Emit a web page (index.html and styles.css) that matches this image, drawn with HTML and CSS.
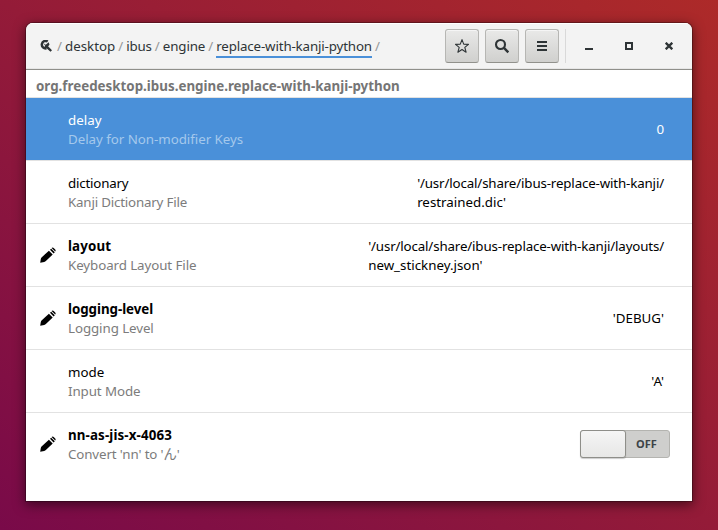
FILE: index.html
```
<!DOCTYPE html>
<html lang="en">
<head>
<meta charset="utf-8">
<title>dconf Editor</title>
<link rel="stylesheet" href="styles.css">
</head>
<body>
<svg width="0" height="0" class="defs" aria-hidden="true">
  <symbol id="pencil" viewBox="0 0 16 16">
    <path d="M.2 15.800L.8 12Q1 11 1.800 10.200L8.900 3.700l3.800 3.800-6.800 6.600q-.7.700-1.700.9zM10 2.800l1.200-1.100 3.600 3.600-1.200 1.200zM11.600.9q1.100-1 2.100 0L15.200 2.500q.9 1 0 2.100z"/>
  </symbol>
</svg>
<div class="window">
  <header class="header">
    <nav class="path">
      <svg class="root-icon" viewBox="0 0 12 12"><path d="M7.700 1.500A3.800 3.800 0 1 0 6.500 8.400" fill="none" stroke="#2e3436" stroke-width="2.500"/><path d="M3.500 3.200l2.200 1.600L8.700 2.200 9.500 4.800 8.100 6.300l3.900 3.900-1.500 1.600-4-3.500-1.600.7L3.500 7.500l1.800-1.600z" fill="#2e3436"/></svg>
      <span class="slash">/</span><a>desktop</a><span class="slash">/</span><a class="tight">ibus</a><span class="slash">/</span><a class="snug">engine</a><span class="slash">/</span><a class="current snug">replace-with-kanji-python</a><span class="slash">/</span>
    </nav>
    <div class="actions">
      <button class="btn" aria-label="Bookmarks"><svg viewBox="0 0 16 16" width="16" height="16"><path d="M8 1.600l1.700 4.500 4.800.3-3.700 3 1.300 4.800L8 11.500l-4.100 2.700 1.300-4.800-3.700-3 4.800-.3z" fill="none" stroke="#2e3436" stroke-width="1.100" stroke-linejoin="round"/></svg></button>
      <button class="btn" aria-label="Search"><svg viewBox="0 0 16 16" width="16" height="16"><circle cx="6.500" cy="6.500" r="4.500" fill="none" stroke="#2e3436" stroke-width="2.100"/><path d="M9.700 9.700l4.600 4.600" stroke="#2e3436" stroke-width="2.400"/></svg></button>
      <button class="btn" aria-label="Menu"><svg viewBox="0 0 16 16" width="16" height="16"><path d="M3 3h10v2H3zM3 7h10v2H3zM3 11h10v2H3z" fill="#2e3436"/></svg></button>
      <span class="separator"></span>
    </div>
    <div class="controls">
      <svg viewBox="0 0 8 8"><path d="M0 6h8v2H0z" fill="#2e3436"/></svg>
      <svg viewBox="0 0 8 8"><path d="M1 1h6v6H1z" fill="none" stroke="#2e3436" stroke-width="2"/></svg>
      <svg viewBox="0 0 8 8"><path d="M.7.700l6.600 6.600M7.300.700L.7 7.300" stroke="#2e3436" stroke-width="2.300"/></svg>
    </div>
  </header>
  <h1 class="schema">org.freedesktop.ibus.engine.replace-with-kanji-python</h1>
  <main class="list">
    <section class="row selected"><div class="mark"></div><div class="key"><div class="name">delay</div><div class="desc even">Delay for Non-modifier Keys</div></div><div class="value">0</div></section>
    <section class="row"><div class="mark"></div><div class="key"><div class="name tight">dictionary</div><div class="desc tight">Kanji Dictionary File</div></div><div class="value multi">'/usr/local/share/ibus-replace-with-kanji/<br><span class="even">restrained.dic'</span></div></section>
    <section class="row edited"><div class="mark"><svg><use href="#pencil"/></svg></div><div class="key"><div class="name wide">layout</div><div class="desc">Keyboard Layout File</div></div><div class="value multi">'/usr/local/share/ibus-replace-with-kanji/layouts/<br><span class="even">new_stickney.json'</span></div></section>
    <section class="row edited"><div class="mark"><svg><use href="#pencil"/></svg></div><div class="key"><div class="name even">logging-level</div><div class="desc">Logging Level</div></div><div class="value">'DEBUG'</div></section>
    <section class="row"><div class="mark"></div><div class="key"><div class="name">mode</div><div class="desc">Input Mode</div></div><div class="value">'A'</div></section>
    <section class="row edited last"><div class="mark"><svg><use href="#pencil"/></svg></div><div class="key"><div class="name wide">nn-as-jis-x-4063</div><div class="desc snug">Convert 'nn' to 'ん'</div></div><div class="switch"><span class="knob"></span><span class="state">OFF</span></div></section>
  </main>
</div>
</body>
</html>
```
FILE: styles.css
```
* { box-sizing: border-box; }
body {
  margin: 0;
  width: 718px;
  height: 530px;
  padding: 23px 26px 29px;
  overflow: hidden;
  font: 13.33px/19px "Noto Sans", "Noto Sans CJK JP", sans-serif;
  color: #000;
  background: linear-gradient(to top right, #790a49 0%, #941b38 50%, #ad2a29 100%);
}
.defs { position: absolute; }
.window {
  height: 478px;
  background: #fff;
  border-radius: 7px 7px 0 0;
  overflow: hidden;
  box-shadow: 0 0 0 1px rgba(0,0,0,.28), 0 3px 12px 1px rgba(0,0,0,.5);
}
.header {
  display: flex;
  height: 47px;
  padding: 6px 19px 6px 14px;
  background: #f3f3f3;
  border-bottom: 1px solid #8f8f8a;
  box-shadow: inset 0 1px #fff, inset 0 -1px #e6e6e6;
  color: #2e3436;
}
.path { display: flex; align-items: center; width: 405px; height: 34px; }
.root-icon { width: 12px; height: 12px; margin-right: 2px; }
.slash { width: 11px; text-align: center; color: #969898; }
.path a { height: 22px; line-height: 20px; margin-top: 2px; border-bottom: 2px solid transparent; white-space: nowrap; }
.path a.current { border-color: #4a90d9; letter-spacing: -.15px; }
.snug { letter-spacing: -.12px; }
.tight { letter-spacing: -.19px; }
.wide { letter-spacing: .13px; }
.even { letter-spacing: -.04px; }
.actions { display: flex; gap: 6px; }
.btn {
  display: flex;
  align-items: center;
  justify-content: center;
  width: 34px;
  height: 34px;
  padding: 0;
  border: 1px solid #b6b6b3;
  border-bottom-color: #91918c;
  border-radius: 3px;
  background: linear-gradient(#e9e9e8, #d0d0ce);
  box-shadow: inset 0 1px #f5f5f5;
}
.separator { width: 1px; background: #d9d9d9; }
.controls { display: flex; gap: 32px; margin: 13px 0 0 19px; }
.controls svg { width: 8px; height: 8px; }
.schema {
  height: 28px;
  margin: 0;
  padding: 7px 10px 0;
  border-bottom: 1px solid #e2e2e2;
  font-size: 13.33px;
  line-height: 19px;
  letter-spacing: .01px;
  color: #757575;
}
.row {
  display: flex;
  align-items: center;
  height: 63px;
  padding: 0 28px 0 14px;
  border-bottom: 1px solid #e2e2e2;
}
.row.last { border-color: transparent; padding-right: 22px; }
.mark { width: 28px; height: 16px; }
.mark svg { display: block; width: 16px; height: 16px; }
.key { flex: 1; padding-top: 1px; }
.edited .name { font-weight: 700; }
.desc { color: #7c7c7c; }
.desc:not(.tight):not(.snug):not(.even) { letter-spacing: -.08px; }
.selected { background: #4a90d9; background-clip: padding-box; color: #fff; }
.selected .desc { color: #a4c8ec; }
.value { white-space: nowrap; }
.value.multi { padding-top: 1px; letter-spacing: -.15px; }
.value .even { letter-spacing: 0; }
.switch {
  display: flex;
  width: 90px;
  height: 28px;
  border: 1px solid #b4b4b0;
  border-radius: 3px;
  background: #cfcfcd;
}
.knob {
  width: 46px;
  height: 28px;
  margin: -1px 0 0 -1px;
  border: 1px solid #8e8e89;
  border-radius: 3px;
  background: linear-gradient(#f5f5f5, #e7e7e6);
  box-shadow: 0 1px 1px rgba(0,0,0,.2);
}
.state { flex: 1; padding-right: 2px; text-align: center; font: 700 11px/25px "Noto Sans", sans-serif; color: #3d4347; }
```
